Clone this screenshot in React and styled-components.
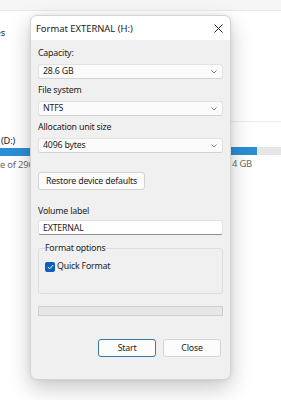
import React from 'react';
import styled, { createGlobalStyle } from 'styled-components';

const GlobalStyle = createGlobalStyle`
  html, body {
    margin: 0;
    padding: 0;
    background: #ffffff;
  }
  body {
    font-family: "Noto Sans", "Open Sans", sans-serif;
    font-size: 8.8px;
    letter-spacing: -0.2px;
    color: #1b1b1b;
  }
`;

// explorer window sitting behind the dialog
const Backdrop = styled.div`
  width: 281px;
  height: 400px;
  overflow: hidden;
  display: grid;
  grid-template-columns: 30px 201px 50px;
  grid-template-rows: 11px 1fr;
  background: #ffffff;
`;

const TopStrip = styled.div`
  grid-column: 1 / -1;
  background: #f6f6f6;
  border-bottom: 1px solid #e9e9e9;
`;

const SideColumn = styled.div`
  display: flex;
  flex-direction: column;
  min-width: 0;
  overflow: hidden;
`;

const ExplorerText = styled.div`
  font-size: 9.4px;
  line-height: 14px;
  white-space: nowrap;
  color: ${p => (p.$muted ? '#6b6b6b' : '#1b1b1b')};
  margin-top: ${p => p.$top || 0}px;
  padding-left: ${p => p.$indent || 0}px;
`;

const ClipText = styled(ExplorerText)`
  width: ${p => p.$w}px;
  overflow: hidden;
  direction: rtl;
`;

const Divider = styled.div`
  height: 1px;
  background: #ececec;
  margin-top: ${p => p.$top}px;
`;

const UsageBar = styled.div`
  height: 8px;
  background: #e6e6e6;
  margin-top: ${p => p.$top}px;
  display: flex;
`;

const UsageFill = styled.div`
  background: #2a8fd4;
  height: 100%;
`;

// dialog
const Dialog = styled.div`
  position: relative;
  z-index: 1;
  margin-top: 4px;
  height: 365px;
  box-sizing: border-box;
  border: 1px solid #d4d4d4;
  border-radius: 7px;
  overflow: hidden;
  background: #f0f0f0;
  box-shadow: 0 8px 22px rgba(0, 0, 0, 0.22), 0 0 4px rgba(0, 0, 0, 0.08);
  display: flex;
  flex-direction: column;
`;

const TitleBar = styled.div`
  height: 24px;
  background: #ffffff;
  display: flex;
  align-items: center;
  justify-content: space-between;
  padding: 0 7px 0 5px;
  font-size: 9.4px;
  letter-spacing: 0;
`;

const CloseGlyph = styled.svg`
  width: 9px;
  height: 9px;
  display: block;
`;

const Body = styled.div`
  padding: 2px 7px 0 7px;
  display: flex;
  flex-direction: column;
`;

const FieldLabel = styled.div`
  line-height: 13px;
  margin: ${p => p.$top ?? 5}px 0 ${p => p.$bottom ?? 4}px 0;
`;

const Select = styled.div`
  height: 15px;
  box-sizing: border-box;
  background: #fbfbfb;
  border: 1px solid #e2e2e2;
  border-bottom-color: #d2d2d2;
  border-radius: 3px;
  display: flex;
  align-items: center;
  justify-content: space-between;
  padding: 0 5px 0 4px;
  line-height: 13px;
`;

const Chevron = styled.svg`
  width: 6px;
  height: 4px;
  display: block;
`;

const PlainButton = styled.div`
  height: 18px;
  box-sizing: border-box;
  background: #fcfcfc;
  border: 1px solid ${p => (p.$primary ? '#36789f' : '#d3d3d3')};
  border-radius: 3px;
  display: flex;
  align-items: center;
  justify-content: center;
  width: ${p => p.$w}px;
  margin-top: ${p => p.$top || 0}px;
`;

const TextInput = styled.div`
  height: 15px;
  box-sizing: border-box;
  background: #ffffff;
  border: 1px solid #e2e2e2;
  border-bottom-color: #8c8c8c;
  border-radius: 3px;
  display: flex;
  align-items: center;
  padding: 0 4px;
`;

const Group = styled.fieldset`
  margin: 7px 0 0 0;
  padding: 0 6px 20px 6px;
  border: 1px solid #dddddd;
  border-radius: 3px;
  min-inline-size: 0;
`;

const Legend = styled.legend`
  padding: 0;
  line-height: 13px;
`;

const CheckRow = styled.div`
  margin-top: 5px;
  display: flex;
  align-items: center;
  gap: 2px;
  line-height: 13px;
`;

const CheckBox = styled.div`
  width: 10px;
  height: 10px;
  border-radius: 2px;
  background: #0f5fb6;
  display: flex;
  align-items: center;
  justify-content: center;
`;

const Progress = styled.div`
  margin-top: 12px;
  height: 10px;
  box-sizing: border-box;
  background: #e6e6e6;
  border: 1px solid #cfcfcf;
`;

const ButtonRow = styled.div`
  margin-top: 23px;
  display: flex;
  justify-content: flex-end;
  gap: 7px;
  padding-right: 2px;
`;

const Chev = () => (
  <Chevron viewBox="0 0 6 4">
    <polyline points="0.5,0.5 3,3 5.5,0.5" fill="none" stroke="#6e6e6e" strokeWidth="0.9" />
  </Chevron>
);

export default function App() {
  return (
    <>
      <GlobalStyle />
      <Backdrop>
        <TopStrip />
        <SideColumn>
          <ClipText $w={5} $top={15}>Devices and drives</ClipText>
          <ExplorerText $top={94} $indent={1}>(D:)</ExplorerText>
          <UsageBar $top={0}>
            <UsageFill style={{ width: '100%' }} />
          </UsageBar>
          <ExplorerText $muted $top={2}>e of 296 GB</ExplorerText>
        </SideColumn>

        <Dialog>
          <TitleBar>
            <span>Format EXTERNAL (H:)</span>
            <CloseGlyph viewBox="0 0 9 9">
              <path d="M0.5 0.5 L8.5 8.5 M8.5 0.5 L0.5 8.5" stroke="#222" strokeWidth="1" />
            </CloseGlyph>
          </TitleBar>
          <Body>
            <FieldLabel>Capacity:</FieldLabel>
            <Select>
              <span>28.6 GB</span>
              <Chev />
            </Select>
            <FieldLabel>File system</FieldLabel>
            <Select>
              <span>NTFS</span>
              <Chev />
            </Select>
            <FieldLabel>Allocation unit size</FieldLabel>
            <Select>
              <span>4096 bytes</span>
              <Chev />
            </Select>
            <PlainButton $w={107} $top={19}>Restore device defaults</PlainButton>
            <FieldLabel $top={15} $bottom={2}>Volume label</FieldLabel>
            <TextInput>EXTERNAL</TextInput>
            <Group>
              <Legend>Format options</Legend>
              <CheckRow>
                <CheckBox>
                  <svg width="7" height="6" viewBox="0 0 7 6">
                    <polyline points="0.8,3 2.7,4.8 6.2,1" fill="none" stroke="#fff" strokeWidth="1" />
                  </svg>
                </CheckBox>
                <span>Quick Format</span>
              </CheckRow>
            </Group>
            <Progress />
            <ButtonRow>
              <PlainButton $w={58} $primary>Start</PlainButton>
              <PlainButton $w={58}>Close</PlainButton>
            </ButtonRow>
          </Body>
        </Dialog>

        <SideColumn>
          <Divider $top={110} />
          <UsageBar $top={25}>
            <UsageFill style={{ width: '26px' }} />
          </UsageBar>
          <ExplorerText $muted $top={2} $indent={1}>4 GB</ExplorerText>
        </SideColumn>
      </Backdrop>
    </>
  );
}
